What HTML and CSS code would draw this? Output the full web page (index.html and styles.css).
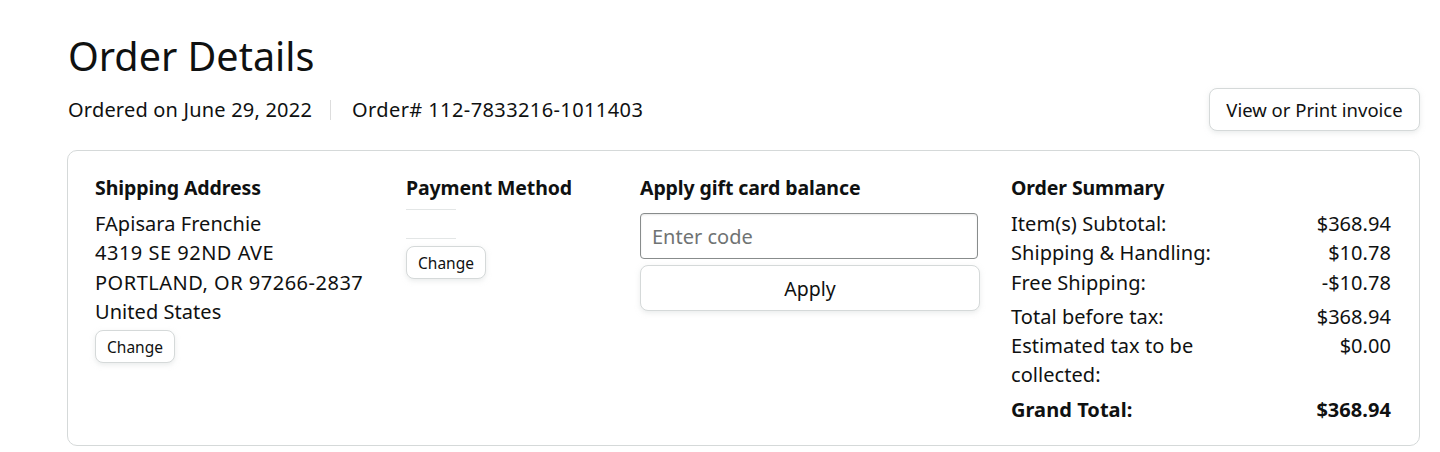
FILE: index.html
```html
<!DOCTYPE html>
<html lang="en">
<head>
<meta charset="utf-8">
<title>Order Details</title>
<link rel="stylesheet" href="styles.css">
</head>
<body>
<main class="page">
  <h1 class="title">Order Details</h1>
  <div class="meta-row">
    <div class="meta">
      <span class="meta-item meta-date">Ordered on June 29, 2022</span>
      <span class="sep"></span>
      <span class="meta-item">Order# 112-7833216-1011403</span>
    </div>
    <button class="btn btn-invoice">View or Print invoice</button>
  </div>
  <section class="card">
    <div class="col col-ship">
      <h2 class="col-title">Shipping Address</h2>
      <div class="lines">
        <div>FApisara Frenchie</div>
        <div class="wide">4319 SE 92ND AVE</div>
        <div class="wide">PORTLAND, OR 97266-2837</div>
        <div>United States</div>
      </div>
      <button class="btn btn-small">Change</button>
    </div>
    <div class="col col-pay">
      <h2 class="col-title">Payment Method</h2>
      <div class="pay-lines">
        <span class="pay-line"></span>
        <span class="pay-line"></span>
      </div>
      <button class="btn btn-small">Change</button>
    </div>
    <div class="col col-gift">
      <h2 class="col-title">Apply gift card balance</h2>
      <input class="code-input" type="text" placeholder="Enter code">
      <button class="btn btn-apply">Apply</button>
    </div>
    <div class="col col-summary">
      <h2 class="col-title">Order Summary</h2>
      <div class="sum-group">
        <div class="sum-row"><span>Item(s) Subtotal:</span><span>$368.94</span></div>
        <div class="sum-row"><span>Shipping &amp; Handling:</span><span>$10.78</span></div>
        <div class="sum-row"><span>Free Shipping:</span><span>-$10.78</span></div>
      </div>
      <div class="sum-group">
        <div class="sum-row"><span>Total before tax:</span><span>$368.94</span></div>
        <div class="sum-row"><span class="wrap">Estimated tax to be collected:</span><span>$0.00</span></div>
      </div>
      <div class="sum-group">
        <div class="sum-row grand"><span>Grand Total:</span><span>$368.94</span></div>
      </div>
    </div>
  </section>
</main>
</body>
</html>
```

FILE: styles.css
```css
* { box-sizing: border-box; }
html, body { margin: 0; padding: 0; background: #fff; }
body {
  font-family: "Noto Sans", "Open Sans", sans-serif;
  color: #0f1111;
  font-size: 20px;
  letter-spacing: 0.05px;
}
.page {
  padding: 26px 20px 0 67px;
}
.title {
  margin: 0 0 0 1px;
  font-size: 39.5px;
  font-weight: 400;
  line-height: 60px;
  letter-spacing: 0;
}
.meta-row {
  display: flex;
  align-items: center;
  justify-content: space-between;
  margin-top: 2px;
}
.meta {
  display: flex;
  align-items: center;
  padding-left: 1px;
  letter-spacing: 0.4px;
}
.meta-date { letter-spacing: 0.2px; }
.sep {
  display: inline-block;
  width: 1px;
  height: 20px;
  background: #ddd;
  margin: 0 21px 0 18px;
}
.btn {
  font-family: inherit;
  color: #0f1111;
  background: #fff;
  border: 1px solid #d5d9d9;
  border-radius: 8px;
  box-shadow: 0 2px 5px rgba(213, 217, 217, 0.5);
  cursor: pointer;
}
.btn-invoice {
  height: 43px;
  width: 211px;
  font-size: 18.5px;
  padding: 0;
}
.card {
  margin-top: 19px;
  border: 1px solid #d5d9d9;
  border-radius: 10px;
  height: 296px;
  padding: 23px 28px 0 27px;
  display: grid;
  grid-template-columns: 311px 234px 371px 1fr;
}
.col-title {
  margin: 0;
  font-size: 19.5px;
  font-weight: 700;
  line-height: 28px;
  letter-spacing: -0.1px;
}
.lines {
  margin-top: 7px;
  line-height: 29.3px;
}
.lines .wide { letter-spacing: 0.5px; }
.btn-small {
  margin-top: 4px;
  height: 33px;
  padding: 0 11px;
  font-size: 15.5px;
  letter-spacing: 0;
}
.pay-lines {
  display: flex;
  flex-direction: column;
  gap: 28px;
  margin-top: 7px;
  width: 50px;
}
.pay-line {
  display: block;
  height: 1px;
  background: #e3e6e6;
}
.col-pay .btn-small { margin-top: 7px; }
.code-input {
  display: block;
  margin-top: 11px;
  width: 338px;
  height: 46px;
  border: 1px solid #888c8c;
  border-radius: 4px;
  padding: 0 11px;
  font-family: inherit;
  font-size: 20px;
  color: #0f1111;
  box-shadow: inset 0 1px 2px rgba(15,17,17,0.1);
}
.code-input::placeholder { color: #6f7373; }
.btn-apply {
  display: block;
  margin-top: 6px;
  width: 340px;
  height: 46px;
  font-size: 19.5px;
}
.sum-group {
  margin-top: 5px;
}
.sum-group:first-of-type { margin-top: 7px; }
.sum-row {
  display: flex;
  justify-content: space-between;
  line-height: 29.3px;
}
.sum-row .wrap { max-width: 200px; }
.grand { font-weight: 700; }
```
